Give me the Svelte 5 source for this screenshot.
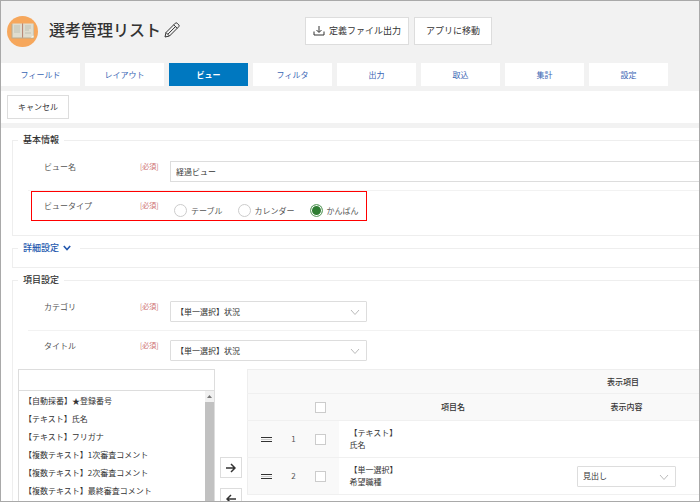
<script>
    const tabs = ['フィールド', 'レイアウト', 'ビュー', 'フィルタ', '出力', '取込', '集計', '設定']
    const viewTypes = ['テーブル', 'カレンダー', 'かんばん']
    const fields = [
        '【自動採番】★登録番号',
        '【テキスト】氏名',
        '【テキスト】フリガナ',
        '【複数テキスト】1次審査コメント',
        '【複数テキスト】2次審査コメント',
        '【複数テキスト】最終審査コメント'
    ]
    const rows = [
        { type: '【テキスト】', name: '氏名' },
        { type: '【単一選択】', name: '希望職種', display: '見出し' }
    ]

    let activeTab = $state('ビュー')
    let viewName = $state('経過ビュー')
    let viewType = $state('かんばん')
    let search = $state('')
</script>

{#snippet chevron()}
    <svg class="chevron" viewBox="0 0 10 7" aria-hidden="true"><path d="M1 1l4 4.500L9 1" /></svg>
{/snippet}

<div class="app">
    <header>
        <svg class="logo" viewBox="0 0 31 31" aria-hidden="true">
            <circle cx="15.5" cy="15.5" r="15.5" fill="#f6a75c" />
            <path d="M4.500 8h22.500v14.500H4.500z" fill="#b9ab90" />
            <path d="M5.500 7.500h9.700v14H5.500zM16 7.500h10.500v14H16z" fill="#dfddcf" />
            <path d="M7 10h6M7 12h6M7 14h6M7 16h6M18 10h6M18 12h6M18 14h4M18 17h6" stroke="#bfc1b5" stroke-width="1" />
            <path d="M15.600 7.500v14" stroke="#b98573" stroke-width="1" />
            <path d="M23.500 21.500l3-2v2z" fill="#fffdf2" />
        </svg>
        <h1>選考管理リスト</h1>
        <button class="edit" aria-label="名前を編集">
            <svg viewBox="0 0 16 16" aria-hidden="true">
                <path d="M1 15l1-4.500L11.300 1.200q.9-.8 1.800 0l1.700 1.700q.8.900 0 1.800L5.500 14zM2 10.500L5.500 14M9.700 2.800l3.500 3.500M3.900 12.200l7.500-7.500" />
            </svg>
        </button>
        <div class="header-actions">
            <button class="btn large">
                <svg class="download" viewBox="0 0 12 10" aria-hidden="true">
                    <path d="M1 5.500V9h10V5.500M6 0v6M3.500 4L6 6.500 8.500 4" />
                </svg>
                定義ファイル出力
            </button>
            <button class="btn large">アプリに移動</button>
        </div>
    </header>

    <nav>
        {#each tabs as tab}
            <button class="tab" class:active={tab === activeTab} onclick={() => (activeTab = tab)}>{tab}</button>
        {/each}
    </nav>

    <div class="toolbar">
        <button class="btn cancel">キャンセル</button>
    </div>

    <main>
        <fieldset>
            <legend>基本情報</legend>
            <div class="row">
                <label class="name" for="view-name">ビュー名</label>
                <span class="required">[必須]</span>
                <input id="view-name" class="text" type="text" bind:value={viewName} />
            </div>
            <div class="row last" role="radiogroup" aria-labelledby="view-type">
                <span class="name" id="view-type">ビュータイプ</span>
                <span class="required">[必須]</span>
                <div class="radios">
                    {#each viewTypes as type}
                        <label>
                            <input type="radio" name="view-type" value={type} bind:group={viewType} />
                            {type}
                        </label>
                    {/each}
                </div>
                <div class="highlight"></div>
            </div>
        </fieldset>

        <fieldset>
            <legend>
                <button class="toggle">
                    詳細設定
                    {@render chevron()}
                </button>
            </legend>
        </fieldset>

        <fieldset class="items">
            <legend>項目設定</legend>
            <div class="row">
                <label class="name" for="category">カテゴリ</label>
                <span class="required">[必須]</span>
                <div class="select">
                    <select id="category"><option>【単一選択】状況</option></select>
                    {@render chevron()}
                </div>
            </div>
            <div class="row last">
                <label class="name" for="title">タイトル</label>
                <span class="required">[必須]</span>
                <div class="select">
                    <select id="title"><option>【単一選択】状況</option></select>
                    {@render chevron()}
                </div>
            </div>

            <div class="picker">
                <div class="source">
                    <input type="text" aria-label="項目を検索" bind:value={search} />
                    <div class="list">
                        <ul>
                            {#each fields.filter((f) => f.includes(search)) as field}
                                <li>{field}</li>
                            {/each}
                        </ul>
                        <div class="scrollbar">
                            <svg viewBox="0 0 9 11" aria-hidden="true"><path d="M2 7l2.500-3L7 7z" /></svg>
                            <div class="thumb"></div>
                        </div>
                    </div>
                </div>

                <div class="move">
                    <button class="btn" aria-label="追加">
                        <svg viewBox="0 0 10 10" aria-hidden="true"><path d="M0 5h9M5 1l4 4-4 4" /></svg>
                    </button>
                    <button class="btn" aria-label="削除">
                        <svg viewBox="0 0 10 10" aria-hidden="true"><path d="M10 5H1M5 1L1 5l4 4" /></svg>
                    </button>
                </div>

                <div class="target">
                    <table>
                        <colgroup>
                            <col class="c-handle" />
                            <col class="c-no" />
                            <col class="c-check" />
                            <col class="c-name" />
                            <col class="c-display" />
                            <col />
                        </colgroup>
                        <thead>
                            <tr class="group"><th colspan="6">表示項目</th></tr>
                            <tr class="heads">
                                <th colspan="2"></th>
                                <th><input type="checkbox" aria-label="すべて選択" /></th>
                                <th>項目名</th>
                                <th>表示内容</th>
                                <th></th>
                            </tr>
                        </thead>
                        <tbody>
                            {#each rows as row, i}
                                <tr>
                                    <td class="side">
                                        <svg class="handle" viewBox="0 0 11 5" aria-hidden="true">
                                            <path class="fill" d="M0 2.500h11" />
                                            <path d="M0 .5h11M0 4.500h11" />
                                        </svg>
                                    </td>
                                    <td class="side">{i + 1}</td>
                                    <td class="side"><input type="checkbox" aria-label={row.name} /></td>
                                    <td class="item">{row.type}<br />{row.name}</td>
                                    <td>
                                        {#if row.display}
                                            <div class="select small">
                                                <select aria-label="表示内容"><option>{row.display}</option></select>
                                                {@render chevron()}
                                            </div>
                                        {/if}
                                    </td>
                                    <td></td>
                                </tr>
                            {/each}
                        </tbody>
                    </table>
                </div>
            </div>
        </fieldset>
    </main>
</div>

<style>
    :global(body) {
        margin: 0;
    }
    .app {
        box-sizing: border-box;
        height: 100vh;
        overflow: hidden;
        border: 1px solid #a9a9a9;
        background: #f2f2f2;
        color: #333;
        font: 8px/12px "Noto Sans CJK JP", sans-serif;
    }
    .app * {
        box-sizing: border-box;
    }
    button,
    input,
    select {
        margin: 0;
        font: inherit;
        color: inherit;
    }
    button {
        padding: 0;
        border: 0;
        background: none;
        cursor: pointer;
    }
    svg {
        fill: none;
        stroke: #333;
        flex: none;
    }

    header {
        display: flex;
        align-items: center;
        height: 62px;
        padding: 0 0 2px 6px;
    }
    .logo {
        width: 31px;
        height: 31px;
        stroke: none;
    }
    h1 {
        margin: 0 3px 4px 11px;
        font-size: 16px;
        line-height: 24px;
        font-weight: 500;
    }
    .edit {
        display: flex;
        margin-bottom: 2px;
    }
    .edit svg {
        width: 16px;
        height: 16px;
    }
    .header-actions {
        display: flex;
        gap: 5px;
        margin-left: 125px;
    }
    .btn {
        display: flex;
        align-items: center;
        justify-content: center;
        border: 1px solid #ddd;
        background: #fff;
    }
    .btn.large {
        height: 28px;
        gap: 4px;
        padding: 0 7px;
        font-size: 9px;
    }
    .btn.large:last-child {
        padding: 0 11px;
    }
    .download {
        width: 12px;
        height: 10px;
    }

    nav {
        display: flex;
        gap: 5px;
    }
    .tab {
        width: 79px;
        height: 23px;
        background: #fff;
        color: #3a66b4;
    }
    .tab.active {
        background: #0078c0;
        color: #fff;
        font-weight: 700;
    }

    .toolbar {
        margin: 5px 0;
        padding: 4px 6px;
        background: #fff;
    }
    .btn.cancel {
        width: 62px;
        height: 24px;
    }

    main {
        padding: 6px 0 0 11px;
        background: #fff;
    }
    fieldset {
        min-width: 0;
        margin: 0 0 6px;
        padding: 6px 0 7px;
        border: 1px solid #eee;
        border-right: 0;
    }
    legend {
        margin-left: 5px;
        padding: 0 5px;
        font-size: 9px;
        font-weight: 500;
    }
    .toggle {
        display: flex;
        align-items: center;
        gap: 4px;
        padding-right: 4px;
        color: #2458ae;
    }
    .toggle .chevron {
        width: 8px;
        height: 6px;
        stroke: #2458ae;
        stroke-width: 2;
    }

    .row {
        display: flex;
        position: relative;
        margin-left: 15px;
        padding: 9px 0 8px 16px;
        border-bottom: 1px solid #f2f2f2;
    }
    .row.last {
        border-bottom: 0;
    }
    .name {
        width: 96px;
        color: #555;
    }
    .required {
        width: 30px;
        color: #cc7070;
        font-size: 7px;
        line-height: 10px;
    }
    .text {
        flex: 1;
        height: 21px;
        padding: 0 5px;
        border: 1px solid #ddd;
        border-right: 0;
        background: #fff;
    }
    .radios {
        display: flex;
        gap: 15px;
        padding: 4px 4px 3px;
        color: #555;
    }
    .radios label {
        display: flex;
        align-items: center;
        gap: 4px;
    }
    input[type='radio'] {
        appearance: none;
        width: 13px;
        height: 13px;
        border: 1px solid #ccc;
        border-radius: 50%;
        background: #fff;
    }
    input[type='radio']:checked {
        border-color: #6fa872;
        background: #2e7d32;
        box-shadow: inset 0 0 0 1px #fff;
    }
    .highlight {
        position: absolute;
        top: 0;
        left: 3px;
        width: 336px;
        height: 30px;
        border: 1px solid #f00;
        pointer-events: none;
    }

    .select {
        position: relative;
        width: 197px;
        height: 21px;
    }
    .select select {
        appearance: none;
        width: 100%;
        height: 100%;
        padding: 0 5px;
        border: 1px solid #ddd;
        border-radius: 1px;
        background: #fff;
    }
    .select .chevron {
        position: absolute;
        right: 7px;
        top: 8px;
        width: 10px;
        height: 7px;
        stroke: #bbb;
        pointer-events: none;
    }
    .select.small {
        width: 99px;
        margin: 0 auto;
    }

    .items {
        padding-bottom: 20px;
    }
    .picker {
        display: flex;
        align-items: flex-start;
        padding-left: 5px;
    }
    .source {
        width: 197px;
        flex: none;
    }
    .source input {
        display: block;
        width: 100%;
        height: 22px;
        padding: 0 5px;
        border: 1px solid #ddd;
        background: #fff;
    }
    .list {
        display: flex;
        height: 160px;
        border: 1px solid #ddd;
        border-top: 0;
        overflow: hidden;
    }
    ul {
        flex: 1;
        margin: 0;
        padding: 1px 5px;
        list-style: none;
    }
    li {
        line-height: 18px;
    }
    .scrollbar {
        display: flex;
        flex-direction: column;
        width: 9px;
        background: #f1f1f1;
    }
    .scrollbar svg {
        height: 11px;
        fill: #777;
        stroke: none;
    }
    .thumb {
        flex: 1;
        background: #c1c1c1;
    }
    .move {
        display: flex;
        flex-direction: column;
        gap: 10px;
        padding: 88px 5px 0;
    }
    .move .btn {
        width: 22px;
        height: 21px;
    }
    .move svg {
        width: 10px;
        height: 10px;
        stroke-width: 1.5;
    }

    .target {
        flex: 1;
        min-width: 0;
        overflow: hidden;
    }
    table {
        table-layout: fixed;
        width: 100%;
        min-width: 752px;
        border-collapse: collapse;
        border: 1px solid #eee;
    }
    .c-handle {
        width: 37px;
    }
    .c-no {
        width: 18px;
    }
    .c-check {
        width: 36px;
    }
    .c-name {
        width: 229px;
    }
    .c-display {
        width: 118px;
    }
    th,
    td {
        height: 37px;
        padding: 0;
        border-bottom: 1px solid #f0f0f0;
        text-align: center;
    }
    th {
        background: #f9f9f9;
        font-weight: 500;
    }
    .group th {
        height: 24px;
    }
    .heads th {
        height: 27px;
    }
    .side {
        background: #f9f9f9;
        color: #555;
    }
    .item {
        padding-left: 11px;
        text-align: left;
    }
    .handle {
        display: block;
        width: 11px;
        height: 5px;
        margin: 0 auto;
    }
    .handle .fill {
        stroke: #ccc;
    }
    input[type='checkbox'] {
        appearance: none;
        display: block;
        width: 11px;
        height: 11px;
        margin: 0 auto;
        border: 1px solid #ccc;
        background: #fff;
    }
    input[type='checkbox']:checked {
        background: #2e7d32;
    }
</style>
